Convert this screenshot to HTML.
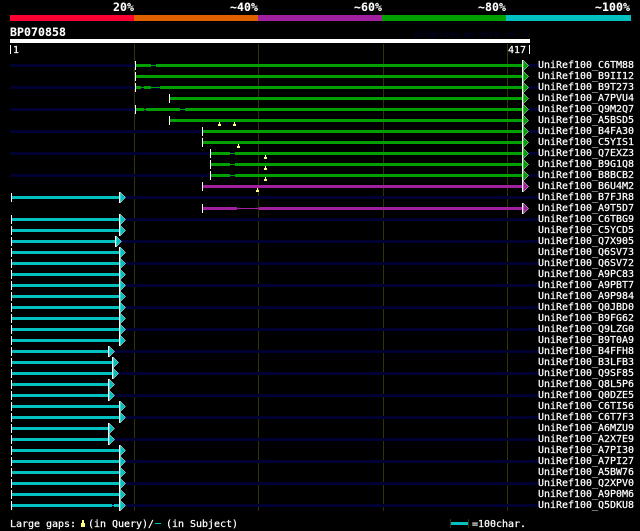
<!DOCTYPE html>
<html>
<head>
<meta charset="utf-8">
<style>
html,body{margin:0;padding:0;background:#000;width:640px;height:531px;overflow:hidden}
svg{display:block}
text{font-family:"DejaVu Sans Mono","Liberation Mono",monospace;font-size:10px;fill:#fff;letter-spacing:-.02px;stroke:#fff;stroke-width:.22px}
.b{font-weight:bold;font-size:11.5px;letter-spacing:.07px;stroke-width:.1px}
.n{fill:#000033}.g{fill:#00a000}.c{fill:#00c0c0}.p{fill:#a020a0}.w{fill:#fff}.k{fill:#333300}
rect{shape-rendering:crispEdges}
</style>
</head>
<body>
<svg width="640" height="531" viewBox="0 0 640 531" xmlns="http://www.w3.org/2000/svg">
<defs>
<g id="ag"><polygon points="1,-4 6.5,1.5 1,7" fill="#00a000" stroke="#fff" stroke-width=".5"/><rect x="0" y="-4" width="1" height="11" class="w"/></g>
<g id="ac"><polygon points="1,-4 6.5,1.5 1,7" fill="#00c0c0" stroke="#fff" stroke-width=".5"/><rect x="0" y="-4" width="1" height="11" class="w"/></g>
<g id="ap"><polygon points="1,-4 6.5,1.5 1,7" fill="#a020a0" stroke="#fff" stroke-width=".5"/><rect x="0" y="-4" width="1" height="11" class="w"/></g>
<g id="y"><rect x="1" y="0" width="1" height="2" fill="#ffff80"/><rect x="0" y="2" width="3" height="2" fill="#ffff80"/></g>
</defs>

<!-- header -->
<text class="b" x="113" y="11">20%</text>
<text class="b" x="230" y="11">~40%</text>
<text class="b" x="354" y="11">~60%</text>
<text class="b" x="478" y="11">~80%</text>
<text class="b" x="595" y="11">~100%</text>
<rect x="10" y="15" width="124" height="6" fill="#ff0033"/>
<rect x="134" y="15" width="124" height="6" fill="#e06000"/>
<rect x="258" y="15" width="124" height="6" fill="#a020a0"/>
<rect x="382" y="15" width="124" height="6" fill="#00a000"/>
<rect x="506" y="15" width="125" height="6" fill="#00c0c0"/>
<text class="b" x="10" y="36">BP070858</text>
<text x="414" y="37" style="font-size:8.3px;fill:#000033;letter-spacing:0;stroke:none">AlignView.pm Beta rel.7</text>
<rect x="10" y="39" width="520" height="4" class="w"/>
<rect x="10" y="45" width="1" height="9" class="w"/>
<text x="13" y="53">1</text>
<text x="508" y="53">417</text>
<rect x="529" y="45" width="1" height="9" class="w"/>

<!-- grid -->
<rect x="134" y="44" width="1" height="467" class="k"/>
<rect x="258" y="44" width="1" height="467" class="k"/>
<rect x="383" y="44" width="1" height="467" class="k"/>
<rect x="507" y="44" width="1" height="467" class="k"/>

<!-- navy lines on even rows -->
<rect x="10" y="64" width="528" height="3" class="n"/>
<rect x="10" y="86" width="528" height="3" class="n"/>
<rect x="10" y="108" width="528" height="3" class="n"/>
<rect x="10" y="130" width="528" height="3" class="n"/>
<rect x="10" y="152" width="528" height="3" class="n"/>
<rect x="10" y="174" width="528" height="3" class="n"/>
<rect x="10" y="196" width="528" height="3" class="n"/>
<rect x="10" y="218" width="528" height="3" class="n"/>
<rect x="10" y="240" width="528" height="3" class="n"/>
<rect x="10" y="262" width="528" height="3" class="n"/>
<rect x="10" y="284" width="528" height="3" class="n"/>
<rect x="10" y="306" width="528" height="3" class="n"/>
<rect x="10" y="328" width="528" height="3" class="n"/>
<rect x="10" y="350" width="528" height="3" class="n"/>
<rect x="10" y="372" width="528" height="3" class="n"/>
<rect x="10" y="394" width="528" height="3" class="n"/>
<rect x="10" y="416" width="528" height="3" class="n"/>
<rect x="10" y="438" width="528" height="3" class="n"/>
<rect x="10" y="460" width="528" height="3" class="n"/>
<rect x="10" y="482" width="528" height="3" class="n"/>
<rect x="10" y="504" width="528" height="3" class="n"/>

<!-- green rows -->
<rect x="135" y="61" width="1" height="9" class="w"/><rect x="136" y="64" width="15" height="3" class="g"/><rect x="151" y="65" width="5" height="1" class="g"/><rect x="156" y="64" width="366" height="3" class="g"/><use href="#ag" x="522" y="64"/>
<rect x="135" y="72" width="1" height="9" class="w"/><rect x="136" y="75" width="386" height="3" class="g"/><use href="#ag" x="522" y="75"/>
<rect x="135" y="83" width="1" height="9" class="w"/><rect x="136" y="86" width="5" height="3" class="g"/><rect x="141" y="87" width="3" height="1" class="g"/><rect x="144" y="86" width="7" height="3" class="g"/><rect x="151" y="87" width="9" height="1" class="g"/><rect x="160" y="86" width="362" height="3" class="g"/><use href="#ag" x="522" y="86"/>
<rect x="169" y="94" width="1" height="9" class="w"/><rect x="170" y="97" width="352" height="3" class="g"/><use href="#ag" x="522" y="97"/>
<rect x="135" y="105" width="1" height="9" class="w"/><rect x="136" y="108" width="8" height="3" class="g"/><rect x="144" y="109" width="2" height="1" class="g"/><rect x="146" y="108" width="34" height="3" class="g"/><rect x="180" y="109" width="5" height="1" class="g"/><rect x="185" y="108" width="337" height="3" class="g"/><use href="#ag" x="522" y="108"/>
<rect x="169" y="116" width="1" height="9" class="w"/><rect x="170" y="119" width="352" height="3" class="g"/><use href="#ag" x="522" y="119"/>
<rect x="202" y="127" width="1" height="9" class="w"/><rect x="203" y="130" width="319" height="3" class="g"/><use href="#ag" x="522" y="130"/>
<rect x="202" y="138" width="1" height="9" class="w"/><rect x="203" y="141" width="319" height="3" class="g"/><use href="#ag" x="522" y="141"/>
<rect x="210" y="149" width="1" height="9" class="w"/><rect x="211" y="152" width="19" height="3" class="g"/><rect x="230" y="153" width="5" height="1" class="g"/><rect x="235" y="152" width="287" height="3" class="g"/><use href="#ag" x="522" y="152"/>
<rect x="210" y="160" width="1" height="9" class="w"/><rect x="211" y="163" width="19" height="3" class="g"/><rect x="230" y="164" width="5" height="1" class="g"/><rect x="235" y="163" width="287" height="3" class="g"/><use href="#ag" x="522" y="163"/>
<rect x="210" y="171" width="1" height="9" class="w"/><rect x="211" y="174" width="19" height="3" class="g"/><rect x="230" y="175" width="5" height="1" class="g"/><rect x="235" y="174" width="287" height="3" class="g"/><use href="#ag" x="522" y="174"/>

<!-- purple rows -->
<rect x="202" y="182" width="1" height="9" class="w"/><rect x="203" y="185" width="319" height="3" class="p"/><use href="#ap" x="522" y="185"/>
<rect x="202" y="204" width="1" height="9" class="w"/><rect x="203" y="207" width="34" height="3" class="p"/><rect x="237" y="208" width="22" height="1" class="p"/><rect x="259" y="207" width="263" height="3" class="p"/><use href="#ap" x="522" y="207"/>

<!-- yellow markers -->
<use href="#y" x="218" y="122"/>
<use href="#y" x="233" y="122"/>
<use href="#y" x="237" y="144"/>
<use href="#y" x="264" y="155"/>
<use href="#y" x="264" y="166"/>
<use href="#y" x="264" y="177"/>
<use href="#y" x="256" y="188"/>

<!-- cyan rows -->
<rect x="11" y="193" width="1" height="9" class="w"/><rect x="12" y="196" width="107" height="3" class="c"/><use href="#ac" x="119" y="196"/>
<rect x="11" y="215" width="1" height="9" class="w"/><rect x="12" y="218" width="107" height="3" class="c"/><use href="#ac" x="119" y="218"/>
<rect x="11" y="226" width="1" height="9" class="w"/><rect x="12" y="229" width="107" height="3" class="c"/><use href="#ac" x="119" y="229"/>
<rect x="11" y="237" width="1" height="9" class="w"/><rect x="12" y="240" width="103" height="3" class="c"/><use href="#ac" x="115" y="240"/>
<rect x="11" y="248" width="1" height="9" class="w"/><rect x="12" y="251" width="107" height="3" class="c"/><use href="#ac" x="119" y="251"/>
<rect x="11" y="259" width="1" height="9" class="w"/><rect x="12" y="262" width="107" height="3" class="c"/><use href="#ac" x="119" y="262"/>
<rect x="11" y="270" width="1" height="9" class="w"/><rect x="12" y="273" width="107" height="3" class="c"/><use href="#ac" x="119" y="273"/>
<rect x="11" y="281" width="1" height="9" class="w"/><rect x="12" y="284" width="107" height="3" class="c"/><use href="#ac" x="119" y="284"/>
<rect x="11" y="292" width="1" height="9" class="w"/><rect x="12" y="295" width="107" height="3" class="c"/><use href="#ac" x="119" y="295"/>
<rect x="11" y="303" width="1" height="9" class="w"/><rect x="12" y="306" width="107" height="3" class="c"/><use href="#ac" x="119" y="306"/>
<rect x="11" y="314" width="1" height="9" class="w"/><rect x="12" y="317" width="107" height="3" class="c"/><use href="#ac" x="119" y="317"/>
<rect x="11" y="325" width="1" height="9" class="w"/><rect x="12" y="328" width="107" height="3" class="c"/><use href="#ac" x="119" y="328"/>
<rect x="11" y="336" width="1" height="9" class="w"/><rect x="12" y="339" width="107" height="3" class="c"/><use href="#ac" x="119" y="339"/>
<rect x="11" y="347" width="1" height="9" class="w"/><rect x="12" y="350" width="96" height="3" class="c"/><use href="#ac" x="108" y="350"/>
<rect x="11" y="358" width="1" height="9" class="w"/><rect x="12" y="361" width="100" height="3" class="c"/><use href="#ac" x="112" y="361"/>
<rect x="11" y="369" width="1" height="9" class="w"/><rect x="12" y="372" width="100" height="3" class="c"/><use href="#ac" x="112" y="372"/>
<rect x="11" y="380" width="1" height="9" class="w"/><rect x="12" y="383" width="96" height="3" class="c"/><use href="#ac" x="108" y="383"/>
<rect x="11" y="391" width="1" height="9" class="w"/><rect x="12" y="394" width="96" height="3" class="c"/><use href="#ac" x="108" y="394"/>
<rect x="11" y="402" width="1" height="9" class="w"/><rect x="12" y="405" width="107" height="3" class="c"/><use href="#ac" x="119" y="405"/>
<rect x="11" y="413" width="1" height="9" class="w"/><rect x="12" y="416" width="107" height="3" class="c"/><use href="#ac" x="119" y="416"/>
<rect x="11" y="424" width="1" height="9" class="w"/><rect x="12" y="427" width="96" height="3" class="c"/><use href="#ac" x="108" y="427"/>
<rect x="11" y="435" width="1" height="9" class="w"/><rect x="12" y="438" width="96" height="3" class="c"/><use href="#ac" x="108" y="438"/>
<rect x="11" y="446" width="1" height="9" class="w"/><rect x="12" y="449" width="107" height="3" class="c"/><use href="#ac" x="119" y="449"/>
<rect x="11" y="457" width="1" height="9" class="w"/><rect x="12" y="460" width="107" height="3" class="c"/><use href="#ac" x="119" y="460"/>
<rect x="11" y="468" width="1" height="9" class="w"/><rect x="12" y="471" width="107" height="3" class="c"/><use href="#ac" x="119" y="471"/>
<rect x="11" y="479" width="1" height="9" class="w"/><rect x="12" y="482" width="107" height="3" class="c"/><use href="#ac" x="119" y="482"/>
<rect x="11" y="490" width="1" height="9" class="w"/><rect x="12" y="493" width="107" height="3" class="c"/><use href="#ac" x="119" y="493"/>
<rect x="11" y="501" width="1" height="9" class="w"/><rect x="12" y="504" width="100" height="3" class="c"/><rect x="112" y="505" width="2" height="1" class="c"/><rect x="114" y="504" width="5" height="3" class="c"/><use href="#ac" x="119" y="504"/>

<!-- labels -->
<text x="538" y="68">UniRef100_C6TM88</text>
<text x="538" y="79">UniRef100_B9II12</text>
<text x="538" y="90">UniRef100_B9T273</text>
<text x="538" y="101">UniRef100_A7PVU4</text>
<text x="538" y="112">UniRef100_Q9M2Q7</text>
<text x="538" y="123">UniRef100_A5BSD5</text>
<text x="538" y="134">UniRef100_B4FA30</text>
<text x="538" y="145">UniRef100_C5YIS1</text>
<text x="538" y="156">UniRef100_Q7EXZ3</text>
<text x="538" y="167">UniRef100_B9G1Q8</text>
<text x="538" y="178">UniRef100_B8BCB2</text>
<text x="538" y="189">UniRef100_B6U4M2</text>
<text x="538" y="200">UniRef100_B7FJR8</text>
<text x="538" y="211">UniRef100_A9T5D7</text>
<text x="538" y="222">UniRef100_C6TBG9</text>
<text x="538" y="233">UniRef100_C5YCD5</text>
<text x="538" y="244">UniRef100_Q7X905</text>
<text x="538" y="255">UniRef100_Q6SV73</text>
<text x="538" y="266">UniRef100_Q6SV72</text>
<text x="538" y="277">UniRef100_A9PC83</text>
<text x="538" y="288">UniRef100_A9PBT7</text>
<text x="538" y="299">UniRef100_A9P984</text>
<text x="538" y="310">UniRef100_Q0JBD0</text>
<text x="538" y="321">UniRef100_B9FG62</text>
<text x="538" y="332">UniRef100_Q9LZG0</text>
<text x="538" y="343">UniRef100_B9T0A9</text>
<text x="538" y="354">UniRef100_B4FFH8</text>
<text x="538" y="365">UniRef100_B3LFB3</text>
<text x="538" y="376">UniRef100_Q9SF85</text>
<text x="538" y="387">UniRef100_Q8L5P6</text>
<text x="538" y="398">UniRef100_Q0DZE5</text>
<text x="538" y="409">UniRef100_C6TI56</text>
<text x="538" y="420">UniRef100_C6T7F3</text>
<text x="538" y="431">UniRef100_A6MZU9</text>
<text x="538" y="442">UniRef100_A2X7E9</text>
<text x="538" y="453">UniRef100_A7PI30</text>
<text x="538" y="464">UniRef100_A7PI27</text>
<text x="538" y="475">UniRef100_A5BW76</text>
<text x="538" y="486">UniRef100_Q2XPV0</text>
<text x="538" y="497">UniRef100_A9P0M6</text>
<text x="538" y="508">UniRef100_Q5DKU8</text>

<!-- legend -->
<text x="10" y="527">Large gaps:</text>
<rect x="82" y="520" width="2" height="3" fill="#ffff80"/>
<rect x="81" y="523" width="4" height="4" fill="#ffff80"/>
<text x="88" y="527">(in Query)/</text>
<rect x="155" y="523" width="6" height="1" class="c"/>
<text x="166" y="527">(in Subject)</text>
<rect x="450" y="519" width="1" height="9" class="k"/>
<rect x="468" y="519" width="1" height="9" class="k"/>
<rect x="451" y="522" width="17" height="3" class="c"/>
<text x="472" y="527">=100char.</text>
</svg>
</body>
</html>
